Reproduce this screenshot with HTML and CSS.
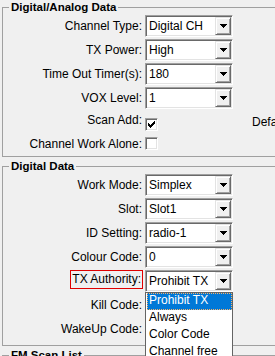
FILE: index.html
```html
<!DOCTYPE html>
<html lang="en">
<head>
    <meta charset="UTF-8">
    <title>Channel settings</title>
    <link rel="stylesheet" href="styles.css">
</head>
<body>
    <div class="panel">
        <fieldset class="group">
            <legend>Digital/Analog Data</legend>
            <div class="row">
                <label class="name">Channel Type:</label>
                <div class="combo"><span class="value">Digital CH</span><span class="drop"><svg width="7" height="4" viewBox="0 0 7 4"><path d="M0 0h7v1H0zM1 1h5v1H1zM2 2h3v1H2zM3 3h1v1H3z"/></svg></span></div>
            </div>
            <div class="row">
                <label class="name">TX Power:</label>
                <div class="combo"><span class="value">High</span><span class="drop"><svg width="7" height="4" viewBox="0 0 7 4"><path d="M0 0h7v1H0zM1 1h5v1H1zM2 2h3v1H2zM3 3h1v1H3z"/></svg></span></div>
            </div>
            <div class="row">
                <label class="name">Time Out Timer(s):</label>
                <div class="combo"><span class="value">180</span><span class="drop"><svg width="7" height="4" viewBox="0 0 7 4"><path d="M0 0h7v1H0zM1 1h5v1H1zM2 2h3v1H2zM3 3h1v1H3z"/></svg></span></div>
            </div>
            <div class="row">
                <label class="name">VOX Level:</label>
                <div class="combo"><span class="value">1</span><span class="drop"><svg width="7" height="4" viewBox="0 0 7 4"><path d="M0 0h7v1H0zM1 1h5v1H1zM2 2h3v1H2zM3 3h1v1H3z"/></svg></span></div>
            </div>
            <div class="checks">
                <div class="row check first">
                    <label class="name">Scan Add:</label>
                    <span class="box"><svg width="7" height="7" viewBox="0 0 7 7"><path d="M6 0h1v3H6zM5 1h1v3H5zM4 2h1v3H4zM3 3h1v3H3zM2 4h1v3H2zM1 3h1v3H1zM0 2h1v3H0z"/></svg></span>
                    <span class="aside">Default Channel:</span>
                </div>
                <div class="row check">
                    <label class="name">Channel Work Alone:</label>
                    <span class="box"></span>
                </div>
            </div>
        </fieldset>

        <fieldset class="group">
            <legend>Digital Data</legend>
            <div class="row">
                <label class="name">Work Mode:</label>
                <div class="combo"><span class="value">Simplex</span><span class="drop"><svg width="7" height="4" viewBox="0 0 7 4"><path d="M0 0h7v1H0zM1 1h5v1H1zM2 2h3v1H2zM3 3h1v1H3z"/></svg></span></div>
            </div>
            <div class="row">
                <label class="name">Slot:</label>
                <div class="combo"><span class="value">Slot1</span><span class="drop"><svg width="7" height="4" viewBox="0 0 7 4"><path d="M0 0h7v1H0zM1 1h5v1H1zM2 2h3v1H2zM3 3h1v1H3z"/></svg></span></div>
            </div>
            <div class="row">
                <label class="name">ID Setting:</label>
                <div class="combo"><span class="value">radio-1</span><span class="drop"><svg width="7" height="4" viewBox="0 0 7 4"><path d="M0 0h7v1H0zM1 1h5v1H1zM2 2h3v1H2zM3 3h1v1H3z"/></svg></span></div>
            </div>
            <div class="row">
                <label class="name">Colour Code:</label>
                <div class="combo"><span class="value">0</span><span class="drop"><svg width="7" height="4" viewBox="0 0 7 4"><path d="M0 0h7v1H0zM1 1h5v1H1zM2 2h3v1H2zM3 3h1v1H3z"/></svg></span></div>
            </div>
            <div class="row">
                <label class="name marked"><span class="mark">TX Authority:</span></label>
                <div class="combo open">
                    <span class="value">Prohibit TX</span><span class="drop"><svg width="7" height="4" viewBox="0 0 7 4"><path d="M0 0h7v1H0zM1 1h5v1H1zM2 2h3v1H2zM3 3h1v1H3z"/></svg></span>
                    <ul class="list">
                        <li class="option active">Prohibit TX</li>
                        <li class="option">Always</li>
                        <li class="option">Color Code</li>
                        <li class="option">Channel free</li>
                    </ul>
                </div>
            </div>
            <div class="row">
                <label class="name">Kill Code:</label>
                <div class="field"></div>
            </div>
            <div class="row">
                <label class="name">WakeUp Code:</label>
                <div class="field"></div>
            </div>
        </fieldset>

        <fieldset class="group">
            <legend>FM Scan List</legend>
            <div class="row"></div>
        </fieldset>
    </div>
</body>
</html>
```

FILE: styles.css
```css
html, body {
    overflow: hidden;
}
body {
    margin: 0;
    background: #f0f0f0;
    color: #000;
    font-family: "Liberation Sans", Arial, sans-serif;
    font-size: 12px;
}
.panel {
    width: 420px;
}
.group {
    margin: 0 0 2px 2px;
    padding: 0 0 3px 6px;
    border: 1px solid #a0a0a0;
    min-width: 0;
}
.group legend {
    padding: 0 2px;
    font-weight: bold;
    font-size: 11.5px;
    line-height: 15px;
}
.row {
    display: flex;
    align-items: center;
    height: 22px;
    margin-bottom: 2px;
}
.name {
    width: 136px;
    padding-right: 3px;
    box-sizing: border-box;
    text-align: right;
    white-space: nowrap;
}
.name.marked {
    padding-right: 2px;
    align-self: flex-start;
}
.mark {
    display: inline-block;
    height: 19px;
    line-height: 17px;
    padding: 0 1px;
    border: 1px solid #e00000;
    box-sizing: border-box;
}
.combo, .field {
    position: relative;
    display: flex;
    width: 88px;
    height: 22px;
    box-sizing: border-box;
    background: #fff;
    border: 1px solid;
    border-color: #a0a0a0 #fff #fff #a0a0a0;
    box-shadow: inset 1px 1px #696969, inset -1px -1px #e3e3e3;
    padding: 1px;
}
.value {
    flex: 1;
    padding-left: 2px;
    line-height: 18px;
    white-space: nowrap;
}
.drop {
    display: flex;
    align-items: center;
    justify-content: center;
    width: 16px;
    height: 18px;
    box-sizing: border-box;
    background: #f0f0f0;
    border: 1px solid;
    border-color: #e3e3e3 #696969 #696969 #e3e3e3;
    box-shadow: inset 1px 1px #fff, inset -1px -1px #a0a0a0;
}
.drop svg {
    shape-rendering: crispEdges;
}
.checks {
    padding-top: 4px;
}
.row.check {
    height: 19px;
    margin-bottom: 0;
}
.row.check.first {
    align-items: flex-start;
}
.row.check.first .name {
    margin-top: -2px;
}
.box {
    display: flex;
    align-items: center;
    justify-content: center;
    width: 13px;
    height: 13px;
    box-sizing: border-box;
    background: #fff;
    border: 1px solid;
    border-color: #a0a0a0 #fff #fff #a0a0a0;
    box-shadow: inset 1px 1px #696969, inset -1px -1px #e3e3e3;
}
.row.check.first .box {
    margin-top: 3px;
}
.box svg {
    shape-rendering: crispEdges;
}
.aside {
    margin-left: 94px;
    white-space: nowrap;
}
.list {
    position: absolute;
    top: 21px;
    left: -1px;
    width: 88px;
    margin: 0;
    padding: 0;
    list-style: none;
    background: #fff;
    border: 1px solid #646464;
    box-sizing: border-box;
    z-index: 2;
}
.option {
    height: 15px;
    line-height: 13px;
    margin-left: 1px;
    padding-left: 1px;
    border: 1px solid transparent;
    white-space: nowrap;
}
.option.active {
    background: #0078d7;
    color: #fff;
    border: 1px dotted #f7b26a;
}
```
